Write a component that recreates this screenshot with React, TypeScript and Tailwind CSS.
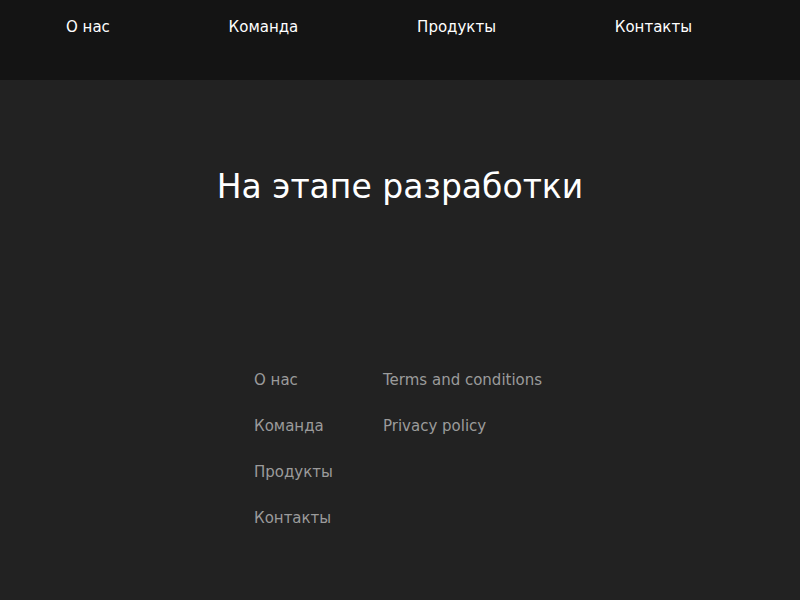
import React from "react";

export default function App() {
  const nav = ["О нас", "Команда", "Продукты", "Контакты"];
  const col1 = ["О нас", "Команда", "Продукты", "Контакты"];
  const col2 = ["Terms and conditions", "Privacy policy"];
  return (
    <div className="w-[800px] h-[600px] bg-[#222222] flex flex-col font-['DejaVu_Sans',sans-serif]">
      <header className="h-[80px] shrink-0 bg-[#141414] flex items-start pt-[17px] pl-[66px] pr-[108px]">
        <nav className="flex w-full justify-between text-[15px] font-medium text-white leading-[20px]">
          {nav.map((n) => (
            <a key={n} className="whitespace-nowrap">{n}</a>
          ))}
        </nav>
      </header>
      <main className="flex justify-center pt-[85px]">
        <h1 className="text-[33px] leading-[43px] text-white font-normal">На этапе разработки</h1>
      </main>
      <footer className="flex pl-[254px] pt-[162px] text-[15px] text-[#9b9b9b]">
        <ul className="w-[129px] flex flex-col gap-[26px]">
          {col1.map((c) => (
            <li key={c} className="leading-[20px] whitespace-nowrap">{c}</li>
          ))}
        </ul>
        <ul className="flex flex-col gap-[26px]">
          {col2.map((c) => (
            <li key={c} className="leading-[20px] whitespace-nowrap">{c}</li>
          ))}
        </ul>
      </footer>
    </div>
  );
}
